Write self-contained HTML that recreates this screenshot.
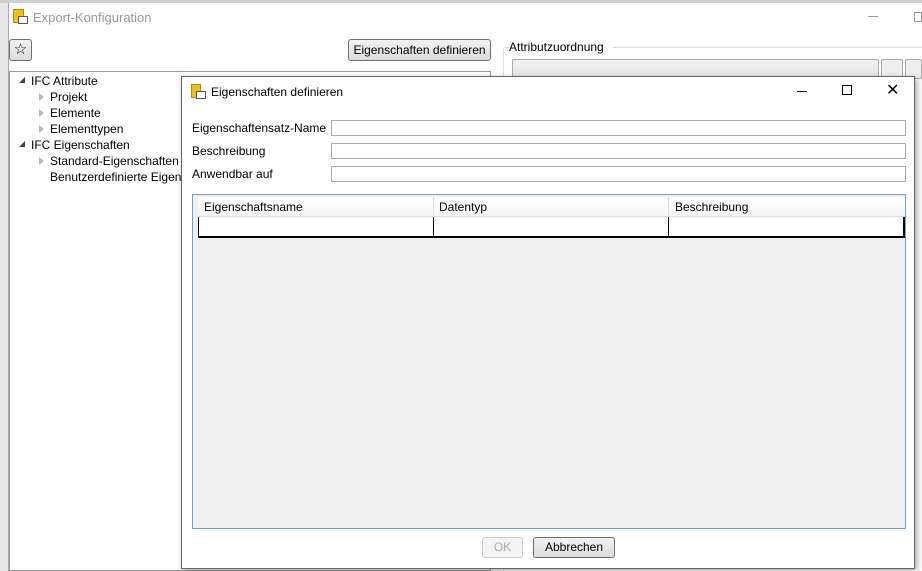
<!DOCTYPE html>
<html><head><style>
*{box-sizing:border-box;margin:0;padding:0}
body{width:922px;height:571px;overflow:hidden;background:#fff;font-family:"Liberation Sans",sans-serif;font-size:12px;color:#000;position:relative}
.a{position:absolute}
.btn{position:absolute;border:1px solid #707070;border-radius:3px;background:linear-gradient(#f2f2f2,#dcdcdc);text-align:center;font-size:12px}
.inp{position:absolute;border:1px solid #ababab;background:#fff;height:16px;left:331px;width:575px}
.tri{position:absolute;width:0;height:0;border-top:4px solid transparent;border-bottom:4px solid transparent;border-left:5px solid #bbb}
</style></head><body>
<div class="a" style="left:0;top:0;width:922px;height:3px;background:#cfcfcf"></div>
<div class="a" style="left:0;top:3px;width:9px;height:568px;background:#e8e8e8"></div>
<div class="a" style="left:8px;top:3px;width:1px;height:568px;background:#aaa"></div>
<div class="a" style="left:13px;top:9px;width:11px;height:14px;background:#f0c020;border:1px solid #c08a00"></div>
<div class="a" style="left:18px;top:16px;width:10px;height:8px;background:#fff;border:1px solid #557"></div>
<div class="a" style="left:33px;top:10px;color:#999;font-size:13px">Export-Konfiguration</div>
<div class="a" style="left:868px;top:16px;width:10px;height:1px;background:#999"></div>
<div class="a" style="left:914px;top:12px;width:8px;height:10px;border:1px solid #999"></div>
<div class="btn" style="left:9px;top:39px;width:23px;height:22px;font-size:15px;line-height:20px">☆</div>
<div class="btn" style="left:348px;top:39px;width:143px;height:22px;line-height:20px">Eigenschaften definieren</div>
<div class="a" style="left:509px;top:40px;font-size:12px">Attributzuordnung</div>
<div class="a" style="left:613px;top:47px;width:309px;height:1px;background:#d5dfe5"></div>
<div class="a" style="left:503px;top:47px;width:6px;height:524px;border-left:1px solid #d5dfe5;border-top:1px solid #d5dfe5;border-radius:3px 0 0 0"></div>
<div class="a" style="left:512px;top:59px;width:367px;height:20px;border:1px solid #acacac;border-radius:2px;background:linear-gradient(#f2f2f2,#e5e5e5)"></div>
<div class="a" style="left:881px;top:59px;width:22px;height:20px;border:1px solid #acacac;border-radius:2px;background:#eee"></div>
<div class="a" style="left:905px;top:59px;width:17px;height:20px;border:1px solid #acacac;border-radius:2px;background:#eee"></div>
<div class="a" style="left:9px;top:71px;width:482px;height:500px;border:1px solid #999;background:#fff"></div>
<div class="a" style="left:19px;top:77px;width:0;height:0;border-left:6px solid transparent;border-bottom:6px solid #444"></div>
<div class="a" style="left:31px;top:74px">IFC Attribute</div>
<div class="tri" style="left:39px;top:93px"></div><div class="a" style="left:50px;top:90px">Projekt</div>
<div class="tri" style="left:39px;top:109px"></div><div class="a" style="left:50px;top:106px">Elemente</div>
<div class="tri" style="left:39px;top:125px"></div><div class="a" style="left:50px;top:122px">Elementtypen</div>
<div class="a" style="left:19px;top:141px;width:0;height:0;border-left:6px solid transparent;border-bottom:6px solid #444"></div>
<div class="a" style="left:31px;top:138px">IFC Eigenschaften</div>
<div class="tri" style="left:39px;top:157px"></div><div class="a" style="left:50px;top:154px">Standard-Eigenschaften</div>
<div class="a" style="left:50px;top:170px">Benutzerdefinierte Eigenschaften</div>
<div class="a" style="left:181px;top:76px;width:734px;height:493px;background:#fff;border:1px solid #666;box-shadow:2px 2px 6px rgba(0,0,0,.35)">
<div class="a" style="left:9px;top:7px;width:10px;height:14px;background:#f0c020;border:1px solid #c08a00"></div>
<div class="a" style="left:14px;top:14px;width:10px;height:8px;background:#fff;border:1px solid #557"></div>
<div class="a" style="left:29px;top:8px;font-size:12px">Eigenschaften definieren</div>
<div class="a" style="left:615px;top:14px;width:10px;height:1px;background:#000"></div>
<div class="a" style="left:660px;top:8px;width:10px;height:10px;border:1px solid #000"></div>
<div class="a" style="left:704px;top:0px;font-size:16px;line-height:28px">✕</div>
</div>
<div class="a" style="left:192px;top:121px">Eigenschaftensatz-Name</div>
<div class="a" style="left:192px;top:144px">Beschreibung</div>
<div class="a" style="left:192px;top:167px">Anwendbar auf</div>
<div class="inp" style="top:120px"></div>
<div class="inp" style="top:143px"></div>
<div class="inp" style="top:166px"></div>
<div class="a" style="left:192px;top:194px;width:714px;height:335px;border:1px solid #7f9db9;background:#f0f0f0"></div>
<div class="a" style="left:198px;top:197px;width:707px;height:20px;background:linear-gradient(#fff,#f4f4f4);border-bottom:1px solid #ddd"></div>
<div class="a" style="left:198px;top:217px;width:707px;height:21px;background:#fff;border-bottom:2px solid #000;border-left:1px solid #000;border-right:2px solid #000"></div>
<div class="a" style="left:433px;top:197px;width:1px;height:40px;background:#000"></div>
<div class="a" style="left:668px;top:197px;width:1px;height:40px;background:#000"></div>
<div class="a" style="left:433px;top:197px;width:1px;height:20px;background:#ddd"></div>
<div class="a" style="left:668px;top:197px;width:1px;height:20px;background:#ddd"></div>
<div class="a" style="left:204px;top:200px">Eigenschaftsname</div>
<div class="a" style="left:439px;top:200px">Datentyp</div>
<div class="a" style="left:675px;top:200px">Beschreibung</div>
<div class="btn" style="left:482px;top:537px;width:41px;height:21px;line-height:19px;color:#aaa;border-color:#ccc;background:#f4f4f4">OK</div>
<div class="btn" style="left:533px;top:537px;width:82px;height:21px;line-height:19px">Abbrechen</div>
</body></html>
